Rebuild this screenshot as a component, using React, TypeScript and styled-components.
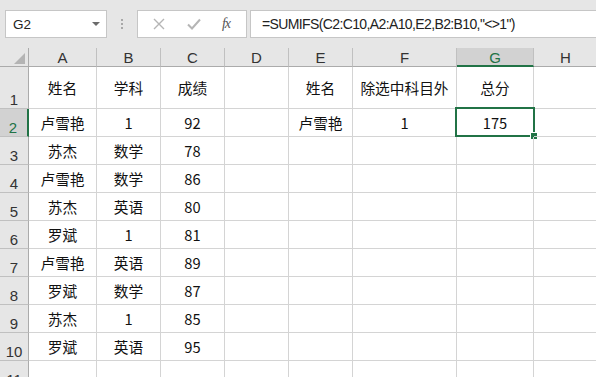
import styled, { createGlobalStyle } from 'styled-components';

const GlobalStyle = createGlobalStyle`
  html, body { margin: 0; padding: 0; background: #ffffff; overflow: hidden; }
  body { width: 596px; height: 377px; }
`;

const GREEN = '#217346';

const columns = [
  { key: 'A', width: 68 },
  { key: 'B', width: 64 },
  { key: 'C', width: 64 },
  { key: 'D', width: 64 },
  { key: 'E', width: 64 },
  { key: 'F', width: 104 },
  { key: 'G', width: 77 },
  { key: 'H', width: 64 },
];

const rows: string[][] = [
  ['姓名', '学科', '成绩', '', '姓名', '除选中科目外', '总分', ''],
  ['卢雪艳', '1', '92', '', '卢雪艳', '1', '175', ''],
  ['苏杰', '数学', '78'],
  ['卢雪艳', '数学', '86'],
  ['苏杰', '英语', '80'],
  ['罗斌', '1', '81'],
  ['卢雪艳', '英语', '89'],
  ['罗斌', '数学', '87'],
  ['苏杰', '1', '85'],
  ['罗斌', '英语', '95'],
  [],
];

const ACTIVE_COL = 6;
const ACTIVE_ROW = 1;

// ── Toolbar ───────────────────────────────────────────────────────
const Toolbar = styled.div`
  height: 48px;
  background: #e6e6e6;
  display: flex;
  align-items: flex-start;
  padding: 10px 0 0 5px;
  box-sizing: border-box;
`;

const NameBox = styled.div`
  width: 102px;
  height: 28px;
  box-sizing: border-box;
  background: #fff;
  border: 1px solid #c6c6c6;
  display: flex;
  align-items: center;
  justify-content: space-between;
  padding: 0 6px 0 7px;
  font-family: "Liberation Sans", Arial, sans-serif;
  font-size: 13.5px;
  color: #222;
`;

const Caret = styled.span`
  width: 0;
  height: 0;
  border-left: 4px solid transparent;
  border-right: 4px solid transparent;
  border-top: 4px solid #6b6b6b;
`;

const Grip = styled.div`
  width: 30px;
  height: 28px;
  display: flex;
  flex-direction: column;
  align-items: center;
  justify-content: center;
  gap: 2px;

  span {
    width: 2px;
    height: 2px;
    background: #a8a8a8;
  }
`;

const FxBox = styled.div`
  width: 110px;
  height: 28px;
  box-sizing: border-box;
  background: #fff;
  border: 1px solid #c6c6c6;
  display: flex;
  align-items: center;
  justify-content: space-around;
  padding: 0 6px 0 4px;
`;

const FxLabel = styled.span`
  font-family: "Liberation Serif", "Times New Roman", serif;
  font-style: italic;
  font-size: 14px;
  color: #555;
  letter-spacing: -1px;
`;

const FormulaInput = styled.div`
  flex: 1;
  height: 28px;
  margin-left: 3px;
  box-sizing: border-box;
  background: #fff;
  border: 1px solid #c6c6c6;
  border-right: none;
  display: flex;
  align-items: center;
  padding-left: 11px;
  font-family: "Liberation Sans", Arial, sans-serif;
  font-size: 14px;
  letter-spacing: -0.62px;
  color: #222;
  white-space: nowrap;
  overflow: hidden;
`;

// ── Sheet ─────────────────────────────────────────────────────────
const Sheet = styled.div`
  display: grid;
  grid-template-columns: 29px ${columns.map(c => `${c.width}px`).join(' ')} 1fr;
  grid-template-rows: 19px 42px repeat(9, 28px) 28px;
  width: 596px;
`;

const Corner = styled.div`
  position: relative;
  background: #e6e6e6;
  border-right: 1px solid #ababab;
  border-bottom: 1px solid #ababab;
  box-sizing: border-box;

  &::after {
    content: '';
    position: absolute;
    right: 3px;
    bottom: 2px;
    width: 0;
    height: 0;
    border-left: 11px solid transparent;
    border-bottom: 11px solid #b4b4b4;
  }
`;

const ColHead = styled.div<{ $active?: boolean }>`
  background: ${p => (p.$active ? '#d2d2d2' : '#e6e6e6')};
  border-right: 1px solid #c0c0c0;
  border-bottom: ${p => (p.$active ? `2px solid ${GREEN}` : '1px solid #ababab')};
  box-sizing: border-box;
  display: flex;
  align-items: center;
  justify-content: center;
  font-family: "Liberation Sans", Arial, sans-serif;
  font-size: 15px;
  color: ${p => (p.$active ? GREEN : '#333')};
  padding-top: 1px;
`;

const RowHead = styled.div<{ $active?: boolean }>`
  background: ${p => (p.$active ? '#d2d2d2' : '#e6e6e6')};
  border-right: ${p => (p.$active ? `2px solid ${GREEN}` : '1px solid #ababab')};
  border-bottom: 1px solid #c0c0c0;
  box-sizing: border-box;
  display: flex;
  align-items: flex-end;
  justify-content: center;
  font-family: "Liberation Sans", Arial, sans-serif;
  font-size: 15px;
  line-height: 15px;
  padding-bottom: 1px;
  padding-right: ${p => (p.$active ? '1px' : '0')};
  color: ${p => (p.$active ? GREEN : '#333')};
`;

const Cell = styled.div`
  position: relative;
  border-right: 1px solid #d4d4d4;
  border-bottom: 1px solid #d4d4d4;
  box-sizing: border-box;
  display: flex;
  align-items: center;
  justify-content: center;
  font-family: "Noto Sans CJK SC", "Noto Sans", sans-serif;
  font-size: 14.7px;
  color: #111;
  white-space: nowrap;
`;

const Selection = styled.div`
  position: absolute;
  left: -2px;
  top: -2px;
  width: 80px;
  height: 30px;
  box-sizing: border-box;
  border: 2px solid ${GREEN};
  pointer-events: none;

  &::after {
    content: '';
    position: absolute;
    right: -4px;
    bottom: -4px;
    width: 6px;
    height: 6px;
    background: ${GREEN};
    border: 1px solid #fff;
    border-right: none;
    border-bottom: none;
  }
`;

const XIcon = () => (
  <svg width="14" height="14" viewBox="0 0 14 14">
    <path d="M2 2 L12 12 M12 2 L2 12" stroke="#b5b5b5" strokeWidth="1.4" fill="none" />
  </svg>
);

const CheckIcon = () => (
  <svg width="16" height="14" viewBox="0 0 16 14">
    <path d="M2 7.5 L6 11.5 L14 2.5" stroke="#b5b5b5" strokeWidth="2" fill="none" />
  </svg>
);

export default function App() {
  return (
    <>
      <GlobalStyle />
      <Toolbar>
        <NameBox>
          <span>G2</span>
          <Caret />
        </NameBox>
        <Grip>
          <span /><span /><span />
        </Grip>
        <FxBox>
          <XIcon />
          <CheckIcon />
          <FxLabel>fx</FxLabel>
        </FxBox>
        <FormulaInput>=SUMIFS(C2:C10,A2:A10,E2,B2:B10,"&lt;&gt;1")</FormulaInput>
      </Toolbar>
      <Sheet>
        <Corner />
        {columns.map((c, i) => (
          <ColHead key={c.key} $active={i === ACTIVE_COL}>{c.key}</ColHead>
        ))}
        <ColHead />
        {rows.map((row, r) => (
          <RowLine key={r} index={r} row={row} />
        ))}
      </Sheet>
    </>
  );
}

function RowLine({ index, row }: { index: number; row: string[] }) {
  return (
    <>
      <RowHead $active={index === ACTIVE_ROW}>{index + 1}</RowHead>
      {columns.map((c, i) => (
        <Cell key={c.key}>
          {row[i] ?? ''}
          {index === ACTIVE_ROW && i === ACTIVE_COL && <Selection />}
        </Cell>
      ))}
      <Cell />
    </>
  );
}
